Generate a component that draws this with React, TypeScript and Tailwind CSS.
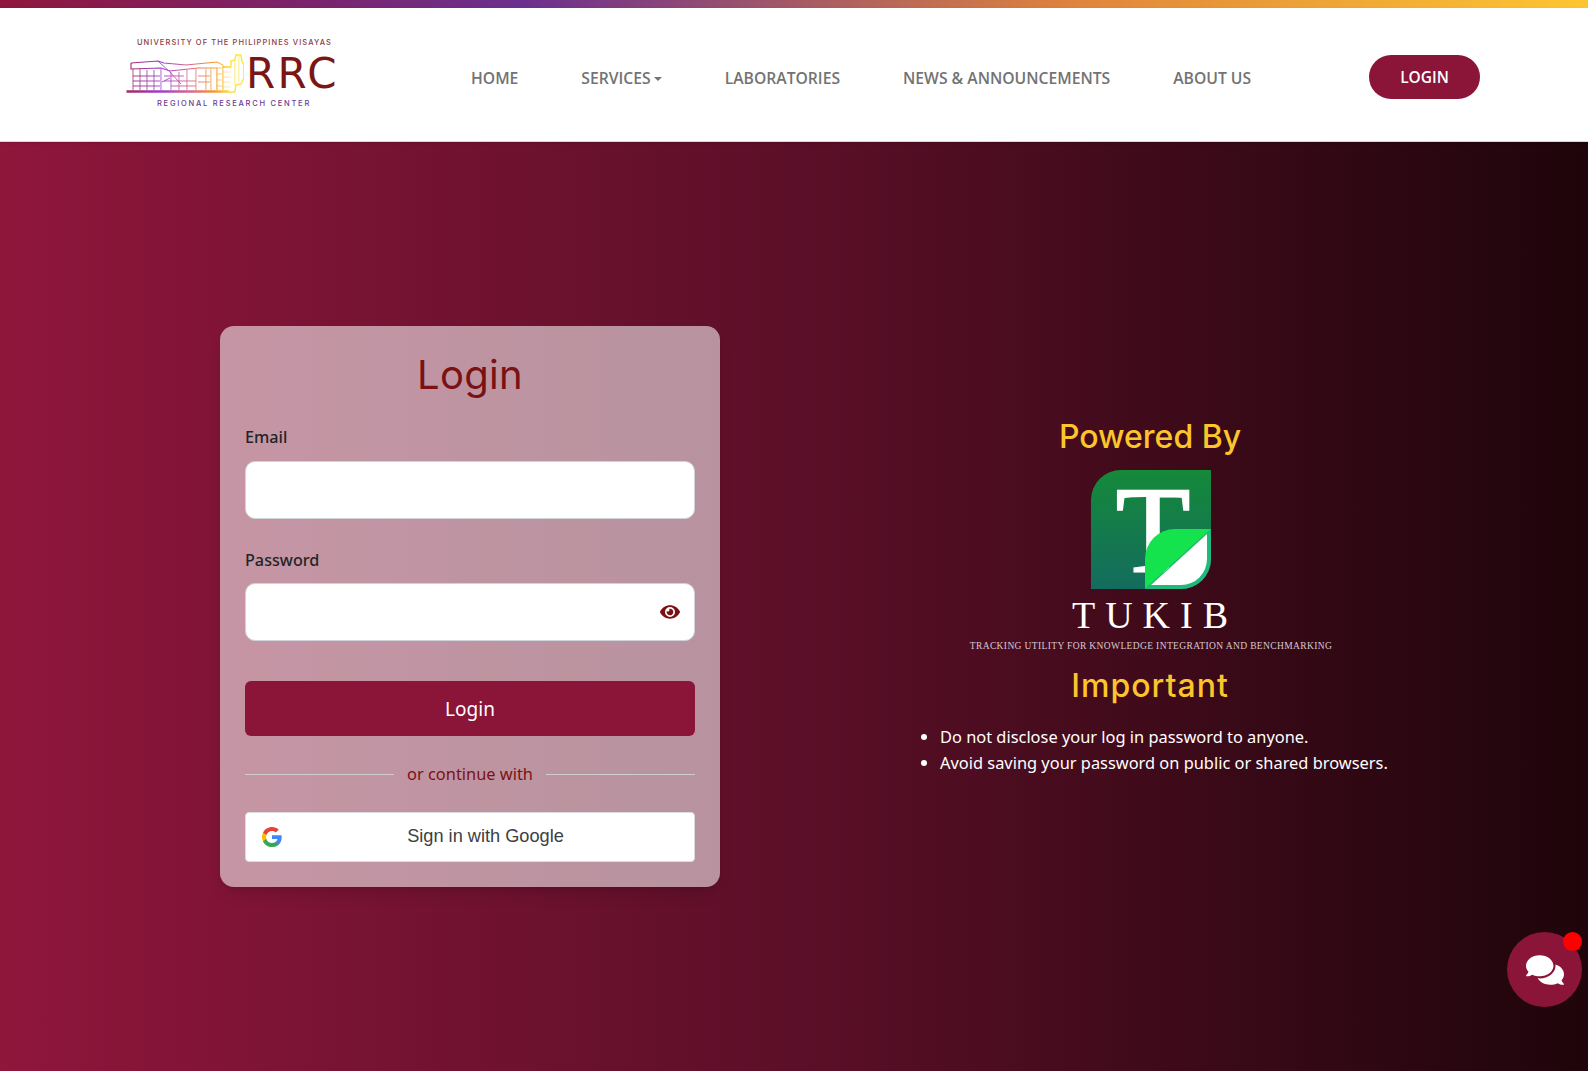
import { FaEye, FaComments } from "react-icons/fa"

function BuildingLogo() {
    return <svg width="118" height="40" viewBox="0 0 118 40" fill="none">
        <defs>
            <linearGradient id="bld" x1="0" y1="0" x2="118" y2="0" gradientUnits="userSpaceOnUse">
                <stop offset="0" stopColor="#a3265f" />
                <stop offset="0.3" stopColor="#9d3fd0" />
                <stop offset="0.55" stopColor="#d9668a" />
                <stop offset="0.75" stopColor="#f79a2c" />
                <stop offset="0.88" stopColor="#fde047" />
                <stop offset="1" stopColor="#fde92f" />
            </linearGradient>
        </defs>
        <g stroke="url(#bld)" strokeWidth="1.1">
            <path d="M0.5 37.5H103" strokeWidth="2.4" />
            <path d="M5 9L32 7L38 9L60 11L91 8L97 11V36" />
            <path d="M5 9V15L35 14L44 17L72 14L91 14V36" />
            <path d="M7 15V36M14 15V36M21 16V36M28 16V36M35 15V36M45 18V36M53 18V36M61 16V36M70 15V36M80 15V36M85 15V36" strokeWidth="0.8" />
            <path d="M7 22H34M7 27H34M7 32H34M38 22H58M38 27H70M45 32H70M72 22H84M72 28H84" strokeWidth="0.9" />
            <path d="M32 7L44 18L55 30M44 24L36 28" strokeWidth="0.9" />
            <path d="M91 14H96M91 20H96M91 26H96M91 32H96" strokeWidth="0.7" />
            <path d="M97 13H105M97 18H105M97 23H105M97 28H105M97 33H105" strokeWidth="0.5" />
            <path d="M97 13L105 13L105 7L109 6L110 1H115L116 7L118 11V24L115 30L110 31L109 38H103" strokeWidth="1.4" />
            <path d="M109 6V31M113 2V28" strokeWidth="0.7" />
        </g>
    </svg>
}

function TukibMark() {
    return <svg width="120" height="119" viewBox="0 0 120 119" className="overflow-visible">
        <defs>
            <linearGradient id="leaf" x1="0" y1="0" x2="0" y2="1">
                <stop offset="0" stopColor="#15893a" />
                <stop offset="1" stopColor="#136c5e" />
            </linearGradient>
        </defs>
        <path d="M30 0H120V89A30 30 0 0 1 90 119H0V30A30 30 0 0 1 30 0Z" fill="url(#leaf)" />
        <text x="62" y="101" textAnchor="middle" fontFamily="'Liberation Serif', serif" fontSize="122" fill="#ffffff" stroke="#ffffff" strokeWidth="2">T</text>
        <path d="M120 59V89A30 30 0 0 1 90 119H54L120 59Z" fill="#20b87c" />
        <path d="M116 64V89A26 26 0 0 1 90 115H60L116 64Z" fill="#ffffff" />
        <path d="M54 119V89A30 30 0 0 1 84 59H120L54 119Z" fill="#14e34d" />
    </svg>
}

function GoogleIcon() {
    return <svg width="22" height="22" viewBox="0 0 24 24">
        <path fill="#4285F4" d="M22.56 12.25c0-.78-.07-1.53-.2-2.25H12v4.26h5.92c-.26 1.37-1.04 2.53-2.21 3.31v2.77h3.57c2.08-1.92 3.28-4.74 3.28-8.09z" />
        <path fill="#34A853" d="M12 23c2.97 0 5.46-.98 7.28-2.66l-3.57-2.77c-.98.66-2.23 1.06-3.71 1.06-2.86 0-5.29-1.93-6.16-4.53H2.18v2.84C3.99 20.53 7.7 23 12 23z" />
        <path fill="#FBBC05" d="M5.84 14.09c-.22-.66-.35-1.36-.35-2.09s.13-1.43.35-2.09V7.07H2.18C1.43 8.55 1 10.22 1 12s.43 3.45 1.18 4.93l2.85-2.22.81-.62z" />
        <path fill="#EA4335" d="M12 5.38c1.62 0 3.06.56 4.21 1.64l3.15-3.15C17.45 2.09 14.97 1 12 1 7.7 1 3.99 3.47 2.18 7.07l3.66 2.84c.87-2.6 3.3-4.53 6.16-4.53z" />
    </svg>
}

function Header() {
    const linkCls = "text-[15.7px] font-semibold text-[#737373] whitespace-nowrap"
    return <header className="relative z-10 h-[134px] bg-white border-b border-[#d9d9d9] shadow-sm flex items-center pl-[126px] pr-[108px] font-['Open_Sans',sans-serif]">
        <div className="w-[213px] flex flex-col -mt-[3px] shrink-0">
            <div className="text-[7.5px] leading-[8px] tracking-[1.07px] text-[#8a3b4a] font-['Inter',sans-serif] font-medium pl-[11px] mb-[7px] whitespace-nowrap">
                UNIVERSITY OF THE PHILIPPINES VISAYAS
            </div>
            <div className="flex items-end h-[40px]">
                <BuildingLogo />
                <span className="ml-[2px] text-[42px] leading-[41px] tracking-[2.5px] text-[#7b1616] font-['DejaVu_Sans',sans-serif]">RRC</span>
            </div>
            <div className="text-[7.5px] leading-[8px] tracking-[1.75px] text-[#6b3a97] font-['Inter',sans-serif] font-medium pl-[31px] mt-[6px] whitespace-nowrap">
                REGIONAL RESEARCH CENTER
            </div>
        </div>
        <nav className="flex items-center gap-[63px] ml-[132px] mt-[9px]">
            <a className={linkCls}>HOME</a>
            <a className={`${linkCls} flex items-center gap-[3px]`}>
                SERVICES
                <span className="border-t-[4px] border-x-[4px] border-x-transparent border-t-[#737373]" />
            </a>
            <a className={linkCls}>LABORATORIES</a>
            <a className={linkCls}>NEWS &amp; ANNOUNCEMENTS</a>
            <a className={linkCls}>ABOUT US</a>
        </nav>
        <button className="ml-auto mt-[5px] w-[111px] h-[44px] pt-[2px] rounded-full bg-[#8a1538] text-white text-[15.5px] font-semibold">
            LOGIN
        </button>
    </header>
}

function LoginCard() {
    const labelCls = "block text-[16.2px] leading-[26px] font-medium text-[#212529] font-['Noto_Sans',sans-serif]"
    const inputCls = "w-full h-[58px] rounded-[10px] border border-[#ced4da] bg-white outline-none px-3"
    return <div className="w-[500px] h-[561px] shrink-0 rounded-[14px] bg-white/55 shadow-lg px-[25px] pt-[21px] flex flex-col">
        <h1 className="text-[40px] leading-[56px] tracking-[0.3px] text-center text-[#7b1113] font-['Inter',sans-serif]">Login</h1>
        <label className={`${labelCls} mt-[21px] mb-[1px]`}>Email</label>
        <input className={`${inputCls} mt-[10px]`} type="email" />
        <label className={`${labelCls} mt-[28px]`}>Password</label>
        <div className="relative mt-[10px]">
            <input className={inputCls} type="password" />
            <FaEye className="absolute right-[15px] top-[19px] text-[#7b1113]" size={20} />
        </div>
        <button className="mt-[40px] h-[55px] pt-[2px] rounded-[6px] bg-[#8a1538] text-white text-[19px] font-['Noto_Sans',sans-serif]">
            Login
        </button>
        <div className="flex items-center mt-[26px] h-[24px]">
            <div className="flex-1 h-px bg-[#d0cccc]" />
            <span className="px-[13px] text-[16.4px] text-[#7b1113] font-['Noto_Sans',sans-serif]">or continue with</span>
            <div className="flex-1 h-px bg-[#d0cccc]" />
        </div>
        <button className="relative mt-[26px] h-[50px] rounded-[4px] border border-[#dadce0] bg-white flex items-center justify-center pl-[31px] text-[18.2px] text-[#3c4043] font-['Liberation_Sans',sans-serif]">
            <span className="absolute left-[15px] top-[13px]"><GoogleIcon /></span>
            Sign in with Google
        </button>
    </div>
}

function PoweredBy() {
    return <div className="flex-1 flex flex-col items-center text-center -mt-[22px]">
        <h2 className="text-[32px] leading-[44px] font-medium text-[#fcc52c] font-['Inter',sans-serif]">Powered By</h2>
        <div className="mt-[11px] ml-[2px]"><TukibMark /></div>
        <div className="mt-[6px] pl-[10px] text-[38px] leading-[40px] tracking-[10px] text-white font-['Liberation_Serif',serif]">TUKIB</div>
        <div className="mt-[5px] pl-[2px] text-[9.5px] leading-[12px] tracking-[0.37px] text-[#d9c8cf] font-['Liberation_Serif',serif] whitespace-nowrap">
            TRACKING UTILITY FOR KNOWLEDGE INTEGRATION AND BENCHMARKING
        </div>
        <h2 className="mt-[12px] text-[32px] leading-[44px] tracking-[1px] font-medium text-[#fcc52c] font-['Inter',sans-serif]">Important</h2>
        <ul className="mt-[16px] self-start ml-[201px] list-disc pl-[19px] text-left text-[16.4px] leading-[26px] text-white font-['Noto_Sans',sans-serif]">
            <li>Do not disclose your log in password to anyone.</li>
            <li>Avoid saving your password on public or shared browsers.</li>
        </ul>
    </div>
}

export default function App() {
    return <div className="min-h-screen flex flex-col">
        <div className="h-[8px] bg-[linear-gradient(to_right,#8f163c,#6c2f8e_33%,#e0853c_68%,#fdc631)]" />
        <Header />
        <main className="flex-1 flex items-center pl-[220px] pr-[8px] bg-linear-to-r from-[#8f163c] via-[#5c0f28] to-[#1f050b]">
            <LoginCard />
            <PoweredBy />
        </main>
        <div className="fixed left-[1507px] top-[932px] z-20 w-[75px] h-[75px] rounded-full bg-[#8a1538] flex items-center justify-center">
            <FaComments className="text-white" size={38} />
            <span className="absolute right-0 top-0 w-[19px] h-[19px] rounded-full bg-[#ff0000]" />
        </div>
    </div>
}
